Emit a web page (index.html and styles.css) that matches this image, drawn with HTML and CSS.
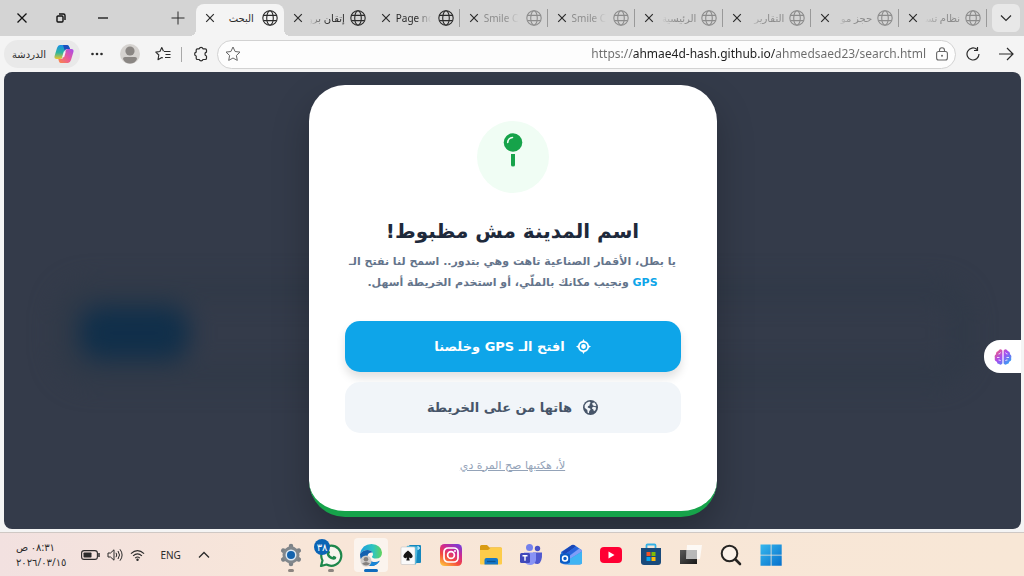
FILE: index.html
```html
<!DOCTYPE html>
<html lang="ar" dir="rtl">
<head>
  <meta charset="UTF-8">
  <meta name="viewport" content="width=device-width, initial-scale=1.0">
  <title>البحث</title>
  <link rel="stylesheet" href="styles.css">
</head>
<body>
  <!-- Shared icons -->
  <svg class="sprite" width="0" height="0" aria-hidden="true">
    <symbol id="globe" viewBox="0 0 16 16"><g fill="none" stroke="currentColor" stroke-width="1.1"><circle cx="8" cy="8" r="7.2"/><ellipse cx="8" cy="8" rx="3.3" ry="7.2"/><path d="M1.5 5.4h13M1.5 10.6h13"/></g></symbol>
    <symbol id="close" viewBox="0 0 10 10"><path d="M1.2 1.2l7.6 7.6M8.8 1.2L1.2 8.8" fill="none" stroke="currentColor" stroke-width="1.2"/></symbol>
  </svg>

  <!-- Tab strip -->
  <header class="tab-strip">
    <button class="tab-list" aria-label="قائمة علامات التبويب"><svg width="12" height="12" viewBox="0 0 12 12"><path d="M1 3.5l5 5 5-5" fill="none" stroke="currentColor" stroke-width="1.2"/></svg></button>
    <nav class="tabs">
      <div class="tab asleep"><svg class="globe"><use href="#globe"/></svg><span class="tab-title">نظام تسـ</span><button class="tab-close" aria-label="إغلاق"><svg><use href="#close"/></svg></button></div>
      <div class="tab asleep"><svg class="globe"><use href="#globe"/></svg><span class="tab-title">حجز مو</span><button class="tab-close" aria-label="إغلاق"><svg><use href="#close"/></svg></button></div>
      <div class="tab asleep"><svg class="globe"><use href="#globe"/></svg><span class="tab-title">التقارير</span><button class="tab-close" aria-label="إغلاق"><svg><use href="#close"/></svg></button></div>
      <div class="tab asleep"><svg class="globe"><use href="#globe"/></svg><span class="tab-title">الرئيسية</span><button class="tab-close" aria-label="إغلاق"><svg><use href="#close"/></svg></button></div>
      <div class="tab asleep"><svg class="globe"><use href="#globe"/></svg><span class="tab-title latin" dir="ltr">Smile C</span><button class="tab-close" aria-label="إغلاق"><svg><use href="#close"/></svg></button></div>
      <div class="tab asleep"><svg class="globe"><use href="#globe"/></svg><span class="tab-title latin" dir="ltr">Smile C</span><button class="tab-close" aria-label="إغلاق"><svg><use href="#close"/></svg></button></div>
      <div class="tab"><svg class="globe"><use href="#globe"/></svg><span class="tab-title latin" dir="ltr">Page nc</span><button class="tab-close" aria-label="إغلاق"><svg><use href="#close"/></svg></button></div>
      <div class="tab no-line"><svg class="globe"><use href="#globe"/></svg><span class="tab-title">إتقان برو</span><button class="tab-close" aria-label="إغلاق"><svg><use href="#close"/></svg></button></div>
      <div class="tab active"><svg class="globe"><use href="#globe"/></svg><span class="tab-title">البحث</span><button class="tab-close" aria-label="إغلاق"><svg><use href="#close"/></svg></button></div>
    </nav>
    <button class="new-tab" aria-label="علامة تبويب جديدة"><svg width="14" height="14" viewBox="0 0 14 14"><path d="M7 .5v13M.5 7h13" fill="none" stroke="currentColor"/></svg></button>
    <div class="window-controls">
      <button aria-label="تصغير"><svg width="10" height="10" viewBox="0 0 10 10"><path d="M0 5h10" stroke="currentColor" stroke-width="1.3"/></svg></button>
      <button aria-label="استعادة"><svg width="10" height="10" viewBox="0 0 10 10"><g fill="none" stroke="currentColor" stroke-width="1.4"><rect x="1" y="3" width="6" height="6" rx="1"/><path d="M3 1h4.500Q9 1 9 2.500V7"/></g></svg></button>
      <button aria-label="إغلاق النافذة"><svg width="10" height="10" viewBox="0 0 10 10"><path d="M.5 .5l9 9M9.500 .5l-9 9" fill="none" stroke="currentColor" stroke-width="1.3"/></svg></button>
    </div>
  </header>

  <!-- Toolbar -->
  <div class="toolbar">
    <button class="tool" aria-label="التالي"><svg width="16" height="16" viewBox="0 0 16 16"><path d="M1 8h14M9 2l6 6-6 6" fill="none" stroke="currentColor" stroke-width="1.2"/></svg></button>
    <button class="tool" aria-label="تحديث"><svg width="14" height="14" viewBox="0 0 14 14"><path d="M13 7a6 6 0 1 1-2-4.500M11.500 0v3.500H8" fill="none" stroke="currentColor" stroke-width="1.2"/></svg></button>
    <div class="address">
      <svg width="12" height="14" viewBox="0 0 12 14"><g fill="none" stroke="currentColor" stroke-width="1.1"><rect x=".6" y="4.500" width="10.800" height="8.500" rx="2"/><path d="M3.500 4.500V3.200a2.500 2.500 0 0 1 5 0v1.300"/></g><circle cx="6" cy="8.700" r="1" fill="currentColor"/></svg>
      <input class="address-input" type="text" dir="ltr" aria-label="العنوان" value="https://ahmae4d-hash.github.io/ahmedsaed23/search.html">
      <button class="star" aria-label="إضافة إلى المفضلة"><svg width="16" height="16" viewBox="0 0 16 16"><path d="M8 1l2.100 4.500 4.900.6-3.600 3.400.9 4.900L8 12l-4.300 2.400.9-4.900L1 6.100l4.900-.6z" fill="none" stroke="currentColor" stroke-linejoin="round"/></svg></button>
    </div>
    <button class="tool" aria-label="الملحقات"><svg width="16" height="16" viewBox="0 0 16 16"><path d="M4.500 2.800H6.200a2 2 0 0 1 3.800 0h2.200q1.300 0 1.300 1.300v2a2 2 0 0 0 0 3.900v2.200q0 1.300-1.300 1.300H10a2 2 0 0 1-3.800 0H4.500q-1.300 0-1.300-1.300V10a2 2 0 0 1 0-3.900v-2q0-1.300 1.300-1.300z" fill="none" stroke="currentColor" stroke-width="1.200" stroke-linejoin="round"/></svg></button>
    <span class="divider"></span>
    <button class="tool" aria-label="المفضلة"><svg width="16" height="16" viewBox="0 0 16 16"><path d="M8.500 5.200L6.800 1.600 4.900 5.500.8 6.100l3 2.900-.8 4.700 3.800-2.100 1 .5M9 5.500h6.500M10.500 8.500h5M10 11.500h5.500" fill="none" stroke="currentColor" stroke-width="1.100" stroke-linejoin="round"/></svg></button>
    <button class="tool profile" aria-label="الملف الشخصي"><svg width="20" height="20" viewBox="0 0 20 20"><circle cx="10" cy="10" r="10" fill="#d5d2cf"/><circle cx="10" cy="7" r="4.600" fill="#8a8683"/><path d="M3 15q0-2 2-2h10q2 0 2 2-2 4.500-7 4.500T3 15" fill="#8a8683"/></svg></button>
    <button class="tool" aria-label="المزيد"><svg width="14" height="4" viewBox="0 0 14 4"><g fill="currentColor"><circle cx="2.500" cy="2" r="1.300"/><circle cx="7" cy="2" r="1.300"/><circle cx="11.500" cy="2" r="1.300"/></g></svg></button>
    <button class="copilot">
      <svg width="20" height="20" viewBox="0 0 20 20">
        <defs>
          <linearGradient id="cpA" x1="0" y1="0" x2="0" y2="1"><stop offset="0" stop-color="#1a8fe8"/><stop offset=".55" stop-color="#2fb59b"/><stop offset="1" stop-color="#f0c52c"/></linearGradient>
          <linearGradient id="cpB" x1="1" y1="0" x2="0" y2="1"><stop offset="0" stop-color="#a44bee"/><stop offset=".5" stop-color="#e8589b"/><stop offset="1" stop-color="#fb8a45"/></linearGradient>
        </defs>
        <path d="M6 1h7q1.500 0 2 1.500L16 5h-3q-2 0-2.600 2L8.600 13q-.6 2-2.600 2H2.500Q-.2 15 .6 12L3 4Q4 1 6 1z" fill="url(#cpA)"/>
        <path d="M9 1h4q1.500 0 2 1.500L16 5h-3q-1.700 0-2.300 1.500z" fill="#1d4fbf"/>
        <path d="M14 19H7q-1.500 0-2-1.500L4.300 15H7q2 0 2.600-2l1.800-6q.6-2 2.600-2h3.500q2.700 0 1.900 3L17 16q-1 3-3 3z" fill="url(#cpB)"/>
        <path d="M9.800 7.500h2l-1.600 5.500h-2z" fill="#f4f0f5"/>
      </svg>
      الدردشة
    </button>
  </div>

  <!-- Page -->
  <main class="page">
    <div class="blurred-form"><span class="blurred-button"></span></div>

    <section class="modal" role="dialog" aria-labelledby="modal-title">
      <div class="modal-icon">
        <svg width="20" height="36" viewBox="0 0 20 36"><circle cx="10" cy="9.500" r="9.300" fill="#16a34a"/><path d="M4.700 9.500A5.200 5.200 0 0 1 9.500 4.500" fill="none" stroke="#f0fdf4" stroke-width="1.600" stroke-linecap="round"/><path d="M8 21h4v11q0 1.500-2 1.500T8 32z" fill="#16a34a"/></svg>
      </div>
      <h1 class="modal-title" id="modal-title">اسم المدينة مش مظبوط!</h1>
      <p class="modal-text">يا بطل، الأقمار الصناعية تاهت وهي بتدور.. اسمح لنا نفتح الـ <br><span class="gps">GPS</span> ونجيب مكانك بالملّي، أو استخدم الخريطة أسهل.</p>
      <button class="btn btn-primary">
        <svg width="15" height="15" viewBox="0 0 16 16"><path d="M8 0l1.200 2.200A6 6 0 0 1 13.800 6.800L16 8l-2.200 1.200a6 6 0 0 1-4.600 4.600L8 16l-1.200-2.200A6 6 0 0 1 2.200 9.200L0 8l2.200-1.200A6 6 0 0 1 6.800 2.200z" fill="currentColor"/><circle cx="8" cy="8" r="3.300" fill="none" stroke="#0ea5e9" stroke-width="1.500"/></svg>
        افتح الـ GPS وخلصنا
      </button>
      <button class="btn btn-secondary">
        <svg width="15" height="15" viewBox="0 0 16 16"><circle cx="8" cy="8" r="8" fill="currentColor"/><path d="M1.800 5.500Q3.300 2.200 6.700 1.700L8.300 3 7 4.300 7.200 5.600 5.300 6.600 5 8l2.700 1L8 10.500l-1.300 1.200L6.300 14.200 5 13.500 4.600 10.700 1.800 8.200zM9.800 3.200l2.500-.6 2 3.100-1.100 1-1.800-.5-1.200-1zM9.700 8l1.800-.8 2.500.8-.6 2.700-1.700 1.400-.8-2.300-1.200-.6z" fill="#f1f5f9"/></svg>
        هاتها من على الخريطة
      </button>
      <a class="dismiss" href="#">لأ، هكتبها صح المرة دي</a>
    </section>

    <button class="assistant" aria-label="المساعد">
      <svg width="18" height="16" viewBox="0 0 18 16">
        <defs><linearGradient id="brain" x1="0" y1="0" x2="1" y2="1"><stop offset="0" stop-color="#ff5f6d"/><stop offset=".45" stop-color="#a64df0"/><stop offset="1" stop-color="#16b5f5"/></linearGradient></defs>
        <path d="M8.400 1.500v13Q7 16.500 5 15 3 15 2.800 12.800 0 12 .9 9 0 6.500 2 5.200 1.700 2.500 4.200 2 6-1 8.400 1.500zM9.600 1.500v13Q11 16.500 13 15q2 0 2.200-2.200Q18 12 17.100 9 18 6.500 16 5.200 16.300 2.500 13.800 2 12-1 9.600 1.500z" fill="url(#brain)"/>
        <path d="M6.500 3.500Q6 5 4.500 5M3 8.500h2.500M6.500 12Q6 10.500 4.500 11M11.500 3.500q.5 1.500 2 1.500M15 8.500h-2.500M11.500 12q.5-1.500 2-1" fill="none" stroke="#fff" stroke-width=".8"/>
      </svg>
    </button>
  </main>

  <!-- Taskbar -->
  <footer class="taskbar">
    <div class="apps">
      <button class="app" aria-label="ابدأ"><svg viewBox="0 0 24 24"><defs><linearGradient id="win" x1="0" y1="0" x2="1" y2="1"><stop offset="0" stop-color="#37b8ee"/><stop offset="1" stop-color="#0670cc"/></linearGradient></defs><path d="M1.500 1.500h10.200v10.200H1.500zM12.500 1.500h10.200v10.200H12.500zM1.500 12.500h10.200v10.200H1.500zM12.500 12.500h10.200v10.200H12.500z" fill="url(#win)"/></svg></button>
      <button class="app" aria-label="بحث"><svg viewBox="0 0 24 24"><circle cx="10.500" cy="10.500" r="7.800" fill="#fbf1e8" stroke="#262422" stroke-width="2"/><path d="M16.500 16.500l4.500 4.500" stroke="#262422" stroke-width="2.600" stroke-linecap="round"/></svg></button>
      <button class="app" aria-label="عرض المهام"><svg viewBox="0 0 24 24"><defs><linearGradient id="tv" x1="0" y1="0" x2="1" y2="1"><stop offset="0" stop-color="#5a5a5a"/><stop offset="1" stop-color="#181818"/></linearGradient></defs><rect x="1" y="7" width="17" height="14" fill="url(#tv)"/><path d="M8 2h15l-2 14H7z" fill="#fff" opacity=".75"/><path d="M7 7h11v9H7z" fill="#aaa" opacity=".6"/></svg></button>
      <button class="app" aria-label="المتجر"><svg viewBox="0 0 24 24"><path d="M7.500 5V2.500Q7.500 1.500 8.500 1.500h7q1 0 1 1V5" fill="none" stroke="#35b1e6" stroke-width="1.800"/><path d="M2 5h20v14q0 3-3 3H5q-3 0-3-3z" fill="#194a7b"/><path fill="#f35325" d="M7.500 9h4v4h-4z"/><path fill="#81bc06" d="M12.500 9h4v4h-4z"/><path fill="#05a6f0" d="M7.500 14h4v4h-4z"/><path fill="#ffba08" d="M12.500 14h4v4h-4z"/></svg></button>
      <button class="app" aria-label="YouTube"><svg viewBox="0 0 24 24"><rect x="1" y="4" width="22" height="16" rx="4" fill="#ff0033"/><path d="M9.500 8.500l6 3.500-6 3.500z" fill="#fff"/></svg></button>
      <button class="app" aria-label="Outlook"><svg viewBox="0 0 24 24"><path d="M2 9L12.500 2.300q1.500-1 3 0L22 6.500q1 .7 1 2V19q0 2.500-2.500 2.500h-14Q3 21.500 3 19z" fill="#2f7fe8"/><path d="M3 9l9.500-6.700q1.500-1 3 0L17 3.300 5 12z" fill="#1b46b5"/><path d="M5 12l12-8.500 3 2L8 14z" fill="#2a64dc"/><path d="M9 14l11-8.300 2 .8q1 .7 1 2L11 16z" fill="#7f9df8"/><path d="M9 17l14-8.500V19q0 2.500-2.500 2.500H9z" fill="#3fb4f3"/><rect x="1" y="10.500" width="10" height="10" rx="2" fill="#0b5cc4"/><circle cx="6" cy="15.500" r="2.500" fill="none" stroke="#fff" stroke-width="1.500"/></svg></button>
      <button class="app" aria-label="Teams"><svg viewBox="0 0 24 24"><circle cx="10.500" cy="4.500" r="3.500" fill="#7380ec"/><circle cx="18.500" cy="5.500" r="2.700" fill="#4951c7"/><path d="M14 9.500h9q.5 10-4 11.500-4 .5-5-3z" fill="#5059cf"/><path d="M5 9.500h12V17q-1 5-6 5-6-.5-6-6z" fill="#8893f5"/><rect x="1" y="10" width="10" height="10" rx="1.500" fill="#4048ba"/><path d="M3.500 12.700h5M6 12.700v5" stroke="#fff" stroke-width="1.400"/></svg></button>
      <button class="app" aria-label="مستكشف الملفات"><svg viewBox="0 0 24 24"><path d="M1 3.500Q1 2 2.500 2H8l2.500 2.500h11Q23 4.500 23 6v4H1z" fill="#d99b13"/><path d="M1 7h8l3-2.500h10q1 0 1 1v15q0 1-1 1H2q-1 0-1-1z" fill="#fdcc4a"/><path d="M5.500 21.500V17q0-2 2-2h9.500q2 0 2 2v4.500z" fill="#1577c8"/><path d="M8 18.500h8.500" stroke="#0b5593" stroke-width="1.400"/></svg></button>
      <button class="app" aria-label="Instagram"><svg viewBox="0 0 24 24"><defs><linearGradient id="ig" x1=".2" y1="1" x2=".8" y2="0"><stop offset="0" stop-color="#fdba3b"/><stop offset=".35" stop-color="#f4493d"/><stop offset=".65" stop-color="#d22a8d"/><stop offset="1" stop-color="#7a3bd6"/></linearGradient></defs><rect x="1" y="1" width="22" height="22" rx="4.500" fill="url(#ig)"/><g fill="none" stroke="#fff" stroke-width="1.700"><rect x="5" y="5" width="14" height="14" rx="4"/><circle cx="12" cy="12" r="3.400"/></g><circle cx="16" cy="8" r="1" fill="#fff"/></svg></button>
      <button class="app" aria-label="Solitaire"><svg viewBox="0 0 24 24"><rect x="10" y="2" width="12" height="18" rx="1" fill="#1587bd"/><path d="M17 5h4M19 3v4" stroke="#bdeaff" stroke-width="1.500"/><rect x="7" y="3" width="11" height="18" rx="1" fill="#4bb9df" transform="rotate(5 12 12)"/><rect x="2" y="4" width="14" height="17.500" rx="1" fill="#fafafa" stroke="#b8b8b8" stroke-width=".5"/><path d="M9 7.500q5.500 4 4.500 6.500-1.200 2-3.500.5l.7 3H7.300l.7-3q-2.300 1.500-3.500-.5-1-2.500 4.500-6.500z" fill="#161616"/></svg></button>
      <button class="app current" aria-label="Edge"><svg viewBox="0 0 24 24"><defs><linearGradient id="edA" x1="0" y1="0" x2="1" y2="0"><stop offset="0" stop-color="#1c9de0"/><stop offset=".6" stop-color="#2fc5c0"/><stop offset="1" stop-color="#62d35b"/></linearGradient></defs><path d="M1 11Q3 1 12.500 1 22 1.500 23 9.500q0 6-6 6-4 0-4-2 1-1 1-2.500Q13 7 8.500 7 4 7 1 11z" fill="url(#edA)"/><path d="M1 11q3-4 7.500-4 4 0 5 2.500-4-.5-5 3Q8 18 14.500 19q4 .5 6.500-1.500Q17.500 23 12 23 1 22 1 11z" fill="#1461b0"/><path d="M9 11q-2 7 5 8.200 4 .3 6.500-1.200-3 5-8.500 5-7-3-3-12z" fill="#1b87d8"/><circle cx="7" cy="18" r="5.500" fill="#d0ccca"/><circle cx="7" cy="16.300" r="2.300" fill="#85807d"/><path d="M3 20.500q4-3 8 0-4 4-8 0" fill="#85807d"/></svg></button>
      <button class="app running" aria-label="WhatsApp"><svg viewBox="0 0 24 24"><path d="M2 23l1.500-5.500A10 10 0 1 1 7.500 21.500z" fill="#f8f4ee" stroke="#1d874b" stroke-width="2.200" stroke-linejoin="round"/><path d="M8.500 7.500q1-1 1.800.3l.8 1.800-1 1.400q1 2 3.300 3l1.300-1.300 2.500 1.200q.5 2.500-2.700 2.800Q8.500 16 7.500 10.500q0-1.800 1-3z" fill="#1d874b"/></svg><span class="badge">٣٨</span></button>
      <button class="app running" aria-label="الإعدادات"><svg viewBox="0 0 24 24"><g stroke="#7c8287" stroke-width="4.500" stroke-linecap="round"><path d="M12 3v18M4.200 7.500l15.600 9M4.200 16.500l15.600-9"/></g><circle cx="12" cy="12" r="8.500" fill="#81878c"/><circle cx="12" cy="12" r="5.500" fill="#dce8f2"/><circle cx="12" cy="12" r="4" fill="#1463ad"/></svg></button>
    </div>
    <div class="tray">
      <button class="tray-more" aria-label="الرموز المخفية"><svg width="12" height="12" viewBox="0 0 12 12"><path d="M1 8.500l5-5 5 5" fill="none" stroke="currentColor" stroke-width="1.300"/></svg></button>
      <button class="lang">ENG</button>
      <button class="status" aria-label="الشبكة والصوت والبطارية">
        <svg width="15" height="14" viewBox="0 0 16 14"><g fill="none" stroke="currentColor" stroke-width="1.200"><path d="M1 5.500q7-6.500 14 0M3.300 8q4.700-4.500 9.400 0M5.500 10.300q2.500-2.300 5 0"/></g><circle cx="8" cy="12" r="1.300" fill="currentColor"/></svg>
        <svg width="16" height="14" viewBox="0 0 16 14"><path d="M1 5h2.500L7 1.800v10.400L3.500 9H1zM9 4.800q1.500 2.200 0 4.400M11 3q3 4 0 8M13 1.300q4.200 5.700 0 11.400" fill="none" stroke="currentColor"/></svg>
        <svg width="19" height="12" viewBox="0 0 19 12"><rect x=".6" y="1.600" width="15.800" height="8.800" rx="2.500" fill="none" stroke="currentColor" stroke-width="1.100"/><rect x="2.500" y="3.400" width="8" height="5.200" rx=".8" fill="currentColor"/><path d="M18 4v4" stroke="currentColor" stroke-width="1.500"/></svg>
      </button>
      <button class="clock"><span>٠٨:٣١ ص</span><span>٢٠٢٦/٠٣/١٥</span></button>
    </div>
  </footer>
</body>
</html>
```
FILE: styles.css
```css
* {
  margin: 0;
  padding: 0;
  box-sizing: border-box;
}

body {
  height: 100vh;
  display: flex;
  flex-direction: column;
  overflow: hidden;
  background-color: #f4f4f4;
  color: #2b2b2b;
  font-family: "Noto Sans", "DejaVu Sans", sans-serif;
  font-size: 10px;
}

button {
  border: none;
  background: none;
  color: inherit;
  font: inherit;
  cursor: pointer;
  display: flex;
  align-items: center;
  justify-content: center;
}

svg {
  flex-shrink: 0;
}

.sprite {
  position: absolute;
}

/* Tab strip */
.tab-strip {
  display: flex;
  align-items: center;
  height: 36px;
  padding: 4px 4px 0;
  background-color: #d4d4d4;
}

.tab-list {
  width: 28px;
  height: 28px;
  margin-left: 5px;
  margin-bottom: 4px;
  border-radius: 6px;
  background-color: #e8e8e8;
}

.tabs {
  display: flex;
  flex: 1;
  max-width: 791px;
  height: 32px;
}

.tab {
  position: relative;
  display: flex;
  flex: 1;
  min-width: 0;
  align-items: center;
  gap: 5px;
  height: 32px;
  padding: 0 6px 4px 9px;
}

.tab::before {
  content: "";
  position: absolute;
  top: 5px;
  right: 0;
  width: 1px;
  height: 18px;
  background-color: #999999;
}

.tab.no-line::before {
  display: none;
}

.tab.active {
  background-color: #f4f4f4;
  border-radius: 8px 8px 0 0;
}

/* curved feet of the active tab */
.tab.active::before,
.tab.active::after {
  content: "";
  position: absolute;
  top: auto;
  bottom: 0;
  width: 6px;
  height: 6px;
}

.tab.active::before {
  right: -6px;
  background: radial-gradient(circle at top right, transparent 6px, #f4f4f4 6px);
}

.tab.active::after {
  left: -6px;
  background: radial-gradient(circle at top left, transparent 6px, #f4f4f4 6px);
}

.tab.asleep .globe,
.tab.asleep .tab-title {
  color: #8c8c8c;
}

.globe {
  width: 16px;
  height: 16px;
}

.tab-title {
  flex: 1;
  min-width: 0;
  overflow: hidden;
  white-space: nowrap;
  line-height: 20px;
  mask-image: linear-gradient(to left, #000 55%, transparent 95%);
}

.tab-title.latin {
  mask-image: linear-gradient(to right, #000 55%, transparent 95%);
}

.tab.active .tab-title {
  padding-right: 3px;
  mask-image: none;
}

.tab-close svg {
  width: 10px;
  height: 10px;
}

.new-tab {
  width: 28px;
  height: 28px;
  margin-left: auto;
  margin-right: 4px;
  margin-bottom: 4px;
}

.window-controls {
  display: flex;
  margin-bottom: 4px;
  color: #111111;
}

.window-controls button {
  width: 42px;
  height: 28px;
}

.window-controls button:last-child {
  width: 36px;
}

/* Toolbar */
.toolbar {
  display: flex;
  align-items: center;
  height: 36px;
  padding: 0 2px 0 4px;
}

.tool {
  width: 33px;
  height: 28px;
}

.address {
  display: flex;
  flex: 1;
  align-items: center;
  gap: 10px;
  height: 29px;
  padding: 0 7px;
  border: 1px solid #d2d2d2;
  border-radius: 15px;
  background-color: #fdfdfd;
  color: #666666;
}

/* the host part of the address is darker than the rest */
.address-input {
  flex: 1;
  min-width: 0;
  border: none;
  outline: none;
  text-align: right;
  font-family: "Noto Sans", sans-serif;
  font-size: 12px;
  line-height: 20px;
  color: transparent;
  caret-color: #222222;
  background-image: linear-gradient(to left, #6b6b6b 151px, #1e1e1e 151px, #1e1e1e 294px, #6b6b6b 294px);
  background-clip: text;
}

.divider {
  width: 1px;
  height: 15px;
  margin: 0 2px;
  background-color: #a8a8a8;
}

.copilot {
  gap: 8px;
  height: 28px;
  padding: 0 6px 0 8px;
  border-radius: 14px;
  background-color: #e9e9e9;
}

/* Page */
.page {
  position: relative;
  display: flex;
  flex: 1;
  align-items: center;
  justify-content: center;
  min-height: 0;
  margin: 0 3px 3px 4px;
  border-radius: 8px;
  overflow: hidden;
  background-color: #343b4a;
}

/* search form behind the overlay */
.blurred-form {
  position: absolute;
  top: 46%;
  left: 5%;
  right: 5%;
  display: flex;
  justify-content: flex-end;
  padding: 8px;
  border: 16px solid #2f3947;
  border-radius: 36px;
  filter: blur(12px);
}

.blurred-button {
  width: 110px;
  height: 54px;
  border-radius: 20px;
  background-color: #102f4a;
}

.modal {
  position: relative;
  display: flex;
  flex-direction: column;
  align-items: center;
  width: 408px;
  max-width: 90%;
  padding: 36px;
  border-bottom: 6px solid #16a34a;
  border-radius: 36px;
  background-color: #ffffff;
  box-shadow: 0 16px 36px rgba(0, 0, 0, 0.25);
  font-family: "DejaVu Sans", sans-serif;
  text-align: center;
}

.modal-icon {
  display: flex;
  justify-content: center;
  width: 72px;
  height: 72px;
  padding-top: 12px;
  border-radius: 50%;
  background-color: #f0fdf4;
}

.modal-title {
  margin-top: 20px;
  color: #1e293b;
  font-size: 20px;
  line-height: 36px;
}

.modal-text {
  margin-top: 2px;
  margin-bottom: 28px;
  color: #64748b;
  font-size: 11px;
  font-weight: bold;
  line-height: 21px;
}

.gps {
  color: #0ea5e9;
}

.btn {
  width: 100%;
  height: 51px;
  gap: 11px;
  border-radius: 15px;
  font-size: 13px;
  font-weight: bold;
}

.btn-primary {
  background-color: #0ea5e9;
  color: #ffffff;
  box-shadow: 0 6px 10px rgba(0, 0, 0, 0.12);
}

.btn-secondary {
  margin-top: 10px;
  background-color: #f1f5f9;
  color: #475569;
}

.dismiss {
  margin-top: 24px;
  color: #94a3b8;
  font-size: 11px;
  line-height: 18px;
}

.assistant {
  position: absolute;
  top: 268px;
  right: 0;
  width: 37px;
  height: 33px;
  border-radius: 16px 0 0 16px;
  background-color: #ffffff;
}

/* Taskbar */
.taskbar {
  display: grid;
  grid-template-columns: 1fr auto 1fr;
  align-items: center;
  height: 44px;
  border-top: 1px solid #cfc8c4;
  background-image: linear-gradient(to right, #f2e1e0, #f8e6d8 30%, #f8e7d6);
}

.apps {
  display: flex;
  grid-column: 2;
  gap: 6px;
  margin-left: 38px;
}

.app {
  position: relative;
  width: 34px;
  height: 34px;
  border-radius: 4px;
}

.app svg {
  width: 24px;
  height: 24px;
}

.app.current {
  background-color: #fbf4ee;
}

.app.running::after,
.app.current::after {
  content: "";
  position: absolute;
  bottom: 0;
  left: 14px;
  width: 6px;
  height: 3px;
  border-radius: 2px;
  background-color: #8d8580;
}

.app.current::after {
  left: 10px;
  width: 14px;
  background-color: #0f6cbd;
}

.badge {
  position: absolute;
  top: 1px;
  left: 0;
  width: 16px;
  height: 16px;
  border-radius: 50%;
  background-color: #0a64b5;
  color: #ffffff;
  line-height: 16px;
}

.tray {
  display: flex;
  grid-column: 3;
  align-items: center;
  justify-content: flex-end;
  gap: 15px;
  padding-left: 16px;
}

.tray-more {
  width: 16px;
}

.status {
  gap: 7px;
}

.clock {
  flex-direction: column;
  align-items: flex-end;
  line-height: 15px;
}
```
